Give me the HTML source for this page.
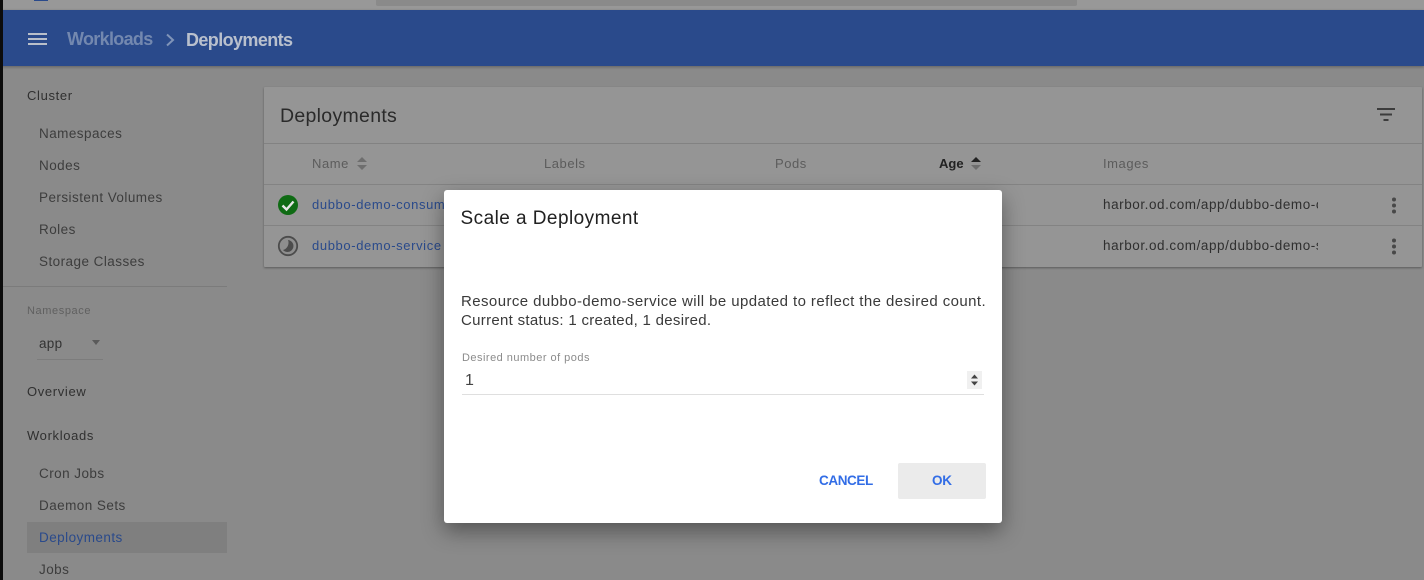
<!DOCTYPE html>
<html><head><meta charset="utf-8"><style>
html,body{margin:0;padding:0}
body{width:1424px;height:580px;overflow:hidden;position:relative;background:#8a8a8a;font-family:"Liberation Sans",Arial,sans-serif}
.a,.t{position:absolute}
.t{white-space:nowrap;line-height:18px;font-size:13.5px;color:#3c3c3c}
.n{color:#3d3d3d;left:39px;letter-spacing:.45px}
.h{color:#303030;left:27px;font-size:13px;letter-spacing:.65px;font-weight:400}
.th{color:#5c5c5c;font-size:13px;letter-spacing:.55px}
.l{color:#2a4a8b;left:312px;font-size:13px;letter-spacing:.62px}
</style></head><body>
<div class="a" style="left:0;top:0;width:1424px;height:10px;background:#989898"></div>
<div class="a" style="left:34px;top:0;width:14px;height:1px;background:#2a4a8b"></div>
<div class="a" style="left:376px;top:0;width:701px;height:6px;background:#8a8a8a;border-radius:0 0 2px 2px"></div>
<div class="a" style="left:0;top:10px;width:1424px;height:56px;background:#2a4a8b;box-shadow:0 1px 3px rgba(0,0,0,.3)"></div>
<div class="a" style="left:0;top:0;width:3px;height:580px;background:#0c0c0c"></div>

<div class="a" style="left:28px;top:33px;width:19px;height:2px;background:#b9bfca"></div>
<div class="a" style="left:28px;top:38px;width:19px;height:2px;background:#b9bfca"></div>
<div class="a" style="left:28px;top:43px;width:19px;height:2px;background:#b9bfca"></div>
<div class="t" style="left:67px;top:28px;font-size:18px;line-height:22px;font-weight:700;color:#7388af;letter-spacing:-.68px">Workloads</div>
<svg class="a" style="left:164px;top:32px" width="12" height="16"><path d="M3 2.500 9 8 3 13.500" fill="none" stroke="#8094b8" stroke-width="2"/></svg>
<div class="t" style="left:186px;top:29px;font-size:18px;line-height:22px;font-weight:700;color:#b9c0cd;letter-spacing:-.6px">Deployments</div>

<div class="t h" style="top:87px">Cluster</div>
<div class="t n" style="top:125px">Namespaces</div>
<div class="t n" style="top:157px">Nodes</div>
<div class="t n" style="top:189px">Persistent Volumes</div>
<div class="t n" style="top:221px">Roles</div>
<div class="t n" style="top:253px">Storage Classes</div>
<div class="a" style="left:3px;top:286px;width:224px;height:1px;background:#7b7b7b"></div>
<div class="t" style="left:27px;top:302px;font-size:11px;color:#606060;letter-spacing:.6px">Namespace</div>
<div class="t" style="left:39px;top:335px;color:#333;letter-spacing:.3px">app</div>
<div class="a" style="left:92px;top:340px;width:0;height:0;border:4px solid transparent;border-top:5px solid #5a5a5a;border-bottom:0"></div>
<div class="a" style="left:37px;top:359px;width:66px;height:1px;background:#7c7c7c"></div>
<div class="t h" style="top:383px">Overview</div>
<div class="t h" style="top:427px">Workloads</div>
<div class="t n" style="top:465px">Cron Jobs</div>
<div class="t n" style="top:497px">Daemon Sets</div>
<div class="a" style="left:27px;top:522px;width:200px;height:31px;background:#7f7f7f"></div>
<div class="t n" style="top:529px;color:#2a4a8b">Deployments</div>
<div class="t n" style="top:561px">Jobs</div>

<div class="a" style="left:264px;top:87px;width:1158px;height:180px;background:#959595;box-shadow:0 1px 2px rgba(0,0,0,.35);border-radius:1px"></div>
<div class="t" style="left:280px;top:104px;font-size:19.5px;line-height:24px;color:#2a2a2a;letter-spacing:.3px">Deployments</div>
<svg class="a" style="left:1377px;top:108px" width="19" height="14"><path d="M0 1h18M3 6.500h12M6.500 12h5" stroke="#3c3c3c" stroke-width="2" fill="none"/></svg>
<div class="a" style="left:264px;top:143px;width:1158px;height:1px;background:#828282"></div>
<div class="a" style="left:264px;top:184px;width:1158px;height:1px;background:#838383"></div>
<div class="a" style="left:264px;top:225px;width:1158px;height:1px;background:#838383"></div>
<div class="t th" style="left:312px;top:155px">Name</div>
<svg class="a" style="left:356px;top:156px" width="12" height="15"><path d="M1 6 6 1l5 5zM1 9l5 5 5-5z" fill="#6e6e6e"/></svg>
<div class="t th" style="left:544px;top:155px">Labels</div>
<div class="t th" style="left:775px;top:155px">Pods</div>
<div class="t th" style="left:939px;top:155px;color:#222;font-weight:700;letter-spacing:0">Age</div>
<svg class="a" style="left:970px;top:156px" width="12" height="15"><path d="M1 6 6 1l5 5z" fill="#222"/><path d="M1 9l5 5 5-5z" fill="#6e6e6e"/></svg>
<div class="t th" style="left:1103px;top:155px">Images</div>

<svg class="a" style="left:277px;top:194px" width="22" height="22"><circle cx="11" cy="11" r="10" fill="#0f6b14"/><path d="M5.500 11.500 9.500 15.500 16.500 7.500" fill="none" stroke="#e6e6e6" stroke-width="2.400"/></svg>
<svg class="a" style="left:277px;top:235px" width="22" height="22"><circle cx="11" cy="11" r="9.200" fill="#8e8e8e" stroke="#4c4c4c" stroke-width="1.800"/><path d="M11 5A6 6 0 1 1 6 15 7.500 7.500 0 0 0 11 5Z" fill="#4c4c4c"/></svg>
<div class="t l" style="top:196px">dubbo-demo-consumer</div>
<div class="t l" style="top:237px">dubbo-demo-service</div>
<div class="a" style="left:1103px;top:190px;width:215px;height:30px;overflow:hidden"><div class="t" style="left:0;top:6px;font-size:13.500px;color:#2f2f2f;letter-spacing:.56px">harbor.od.com/app/dubbo-demo-consumer</div></div>
<div class="a" style="left:1103px;top:231px;width:215px;height:30px;overflow:hidden"><div class="t" style="left:0;top:6px;font-size:13.500px;color:#2f2f2f;letter-spacing:.56px">harbor.od.com/app/dubbo-demo-service</div></div>
<svg class="a" style="left:1390px;top:197px" width="8" height="18"><circle cx="4" cy="2.500" r="2" fill="#484848"/><circle cx="4" cy="8.500" r="2" fill="#484848"/><circle cx="4" cy="14.500" r="2" fill="#484848"/></svg>
<svg class="a" style="left:1390px;top:238px" width="8" height="18"><circle cx="4" cy="2.500" r="2" fill="#484848"/><circle cx="4" cy="8.500" r="2" fill="#484848"/><circle cx="4" cy="14.500" r="2" fill="#484848"/></svg>

<div class="a" style="left:444px;top:190px;width:558px;height:333px;background:#fff;border-radius:3px;box-shadow:0 8px 22px rgba(0,0,0,.4)"></div>
<div class="t" style="left:460.500px;top:208px;font-size:19px;line-height:22px;color:#212121;letter-spacing:.45px">Scale a Deployment</div>
<div class="t" style="left:461px;top:293px;font-size:15px;color:#3a3a3a;letter-spacing:.42px">Resource dubbo-demo-service will be updated to reflect the desired count.</div>
<div class="t" style="left:461px;top:312px;font-size:15px;color:#3a3a3a;letter-spacing:.3px">Current status: 1 created, 1 desired.</div>
<div class="t" style="left:462px;top:349px;font-size:11px;color:#8b8b8b;letter-spacing:.48px">Desired number of pods</div>
<div class="t" style="left:465px;top:372px;font-size:16px;color:#444">1</div>
<div class="a" style="left:967px;top:371px;width:15px;height:18px;background:#f0f0f0"></div>
<svg class="a" style="left:970px;top:373px" width="9" height="14"><path d="M1 5.500 4.500 1.500 8 5.500zM1 8.500 4.500 12.500 8 8.500z" fill="#444"/></svg>
<div class="a" style="left:462px;top:394px;width:522px;height:1px;background:#dfdfdf"></div>
<div class="t" style="left:819px;top:472px;font-size:13.500px;font-weight:700;color:#326de6;letter-spacing:-.4px">CANCEL</div>
<div class="a" style="left:898px;top:463px;width:88px;height:36px;background:#ebebeb;border-radius:2px"></div>
<div class="t" style="left:932px;top:472px;font-size:13.500px;font-weight:700;color:#326de6;letter-spacing:-.3px">OK</div>
</body></html>
